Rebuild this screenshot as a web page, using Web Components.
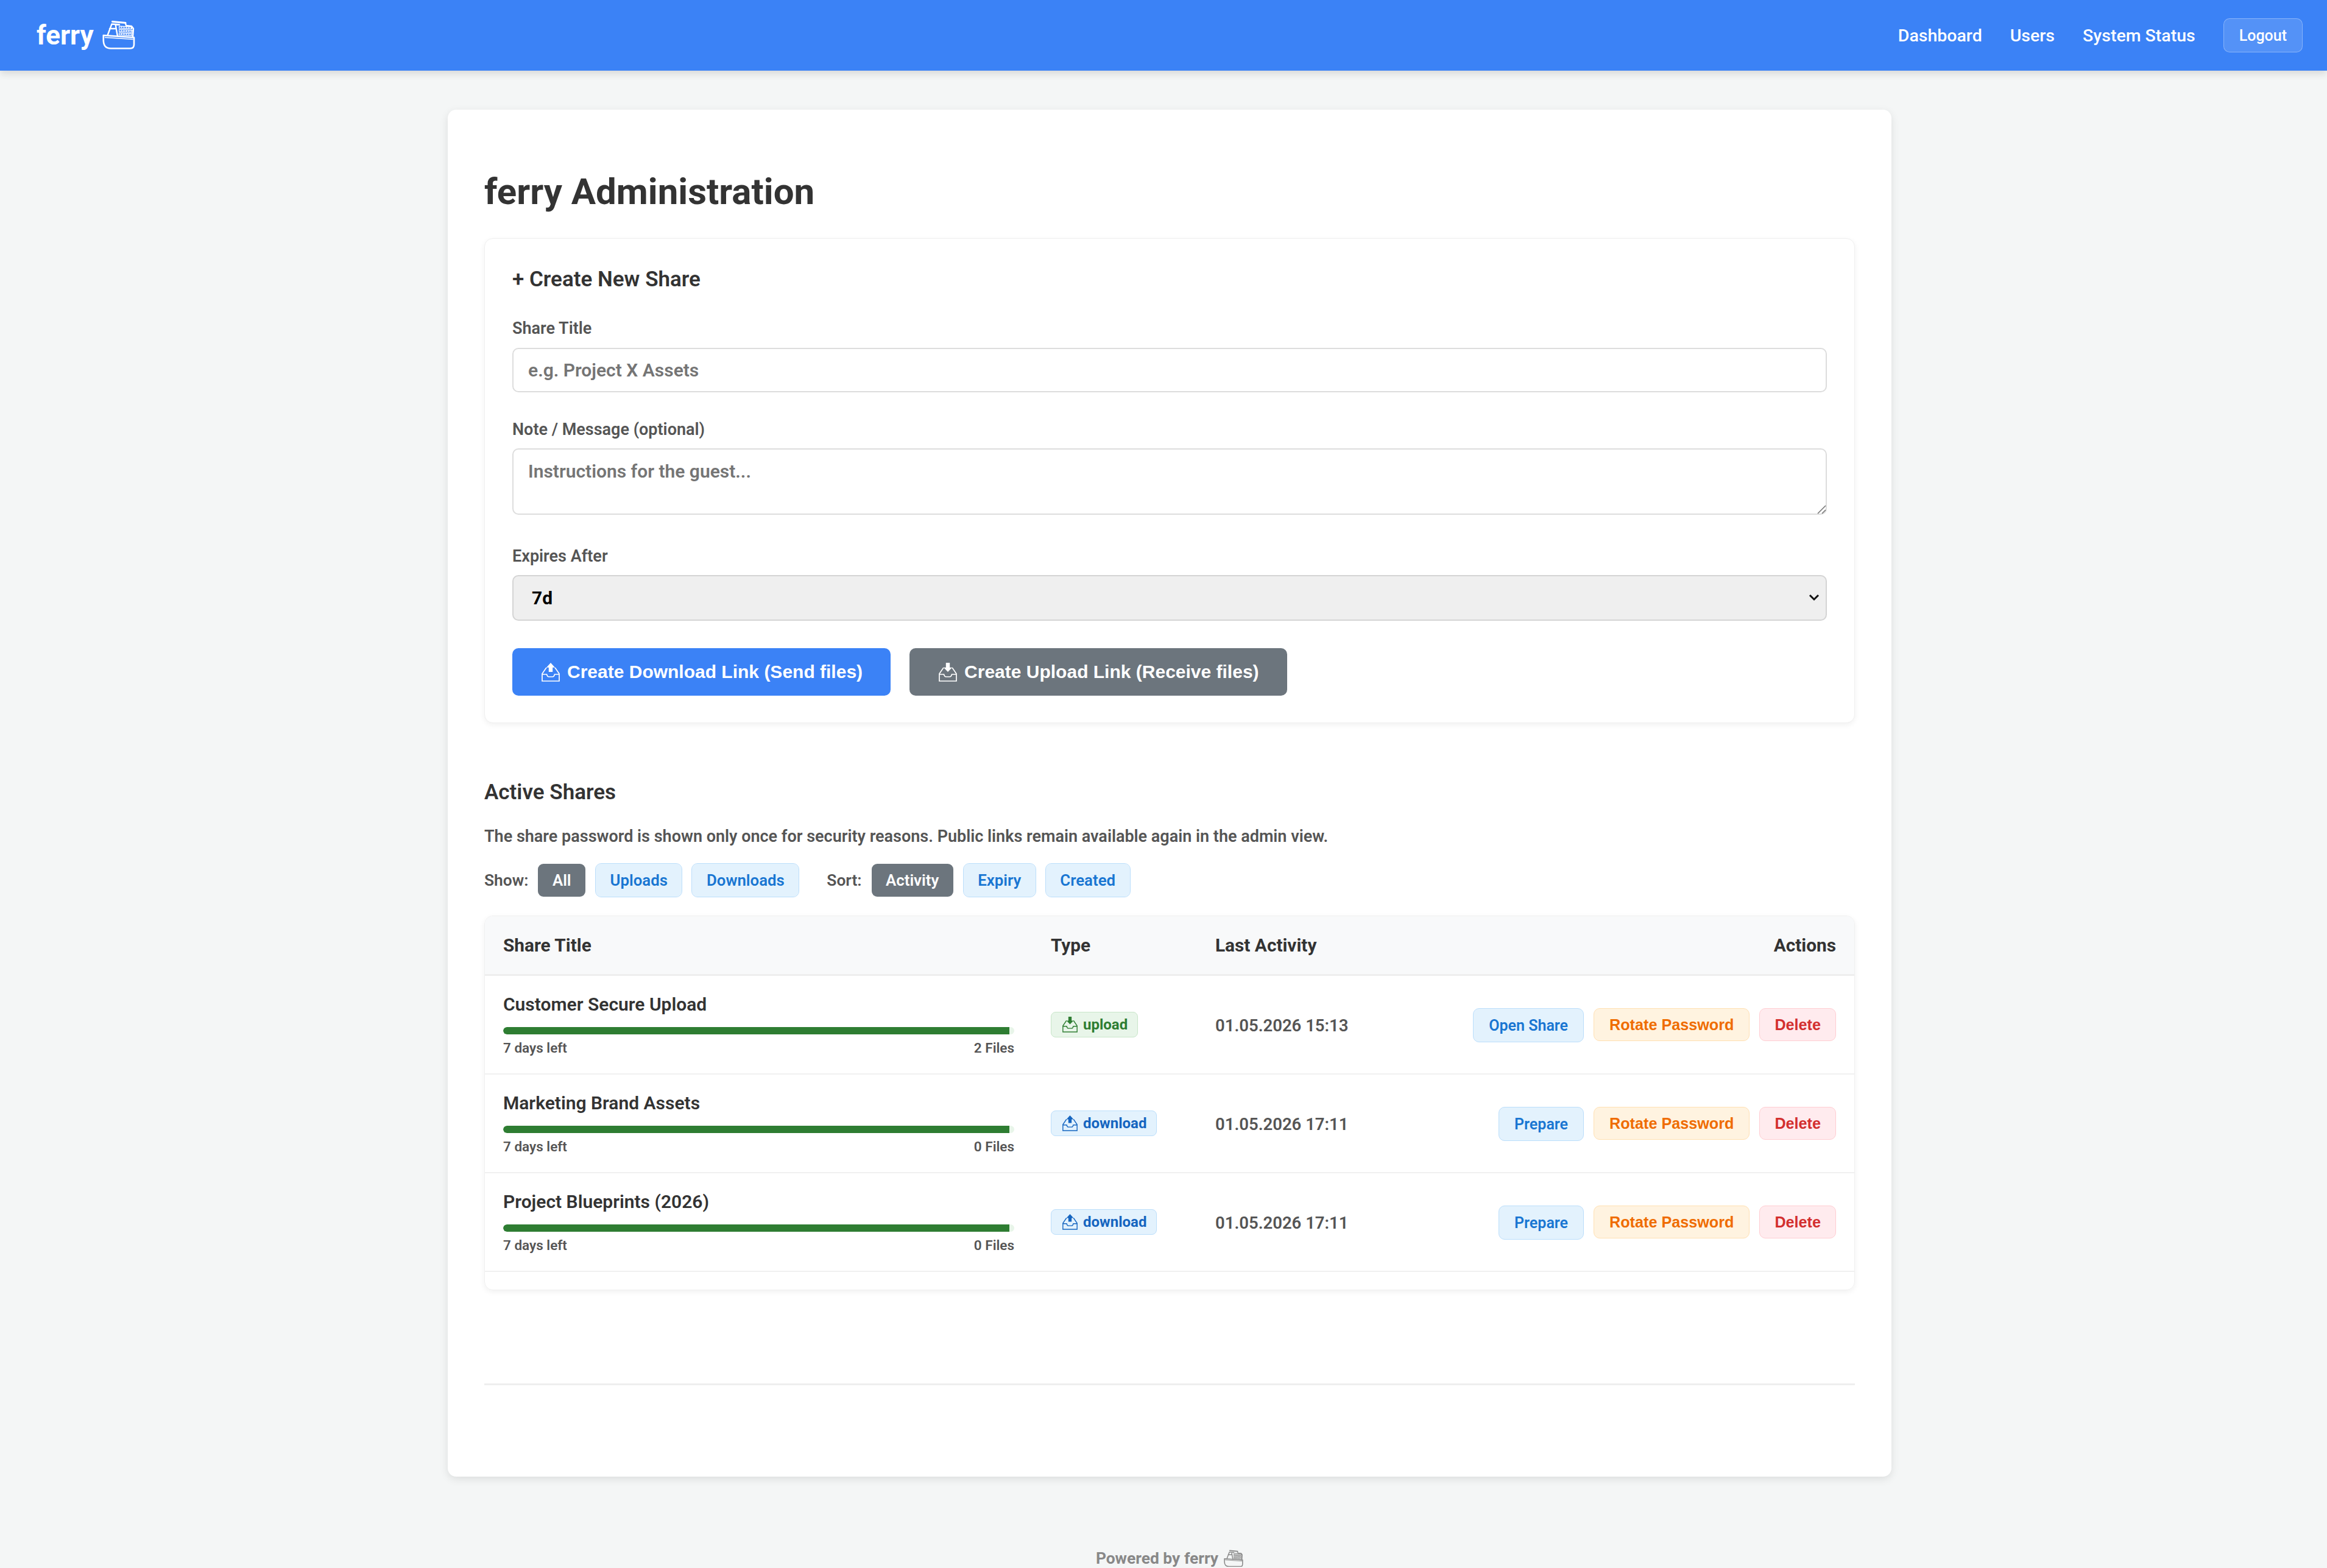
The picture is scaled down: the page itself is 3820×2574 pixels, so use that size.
<!DOCTYPE html>
<html>
<head>
<meta charset="utf-8">
<title>ferry Administration</title>
<style>
  html, body { margin:0; padding:0; background:#f4f6f6; height:2574px; overflow:hidden; font-family:Roboto, "Liberation Sans", sans-serif; }
</style>
</head>
<body>
<ferry-header></ferry-header>
<ferry-page>
  <ferry-create-form></ferry-create-form>
  <ferry-shares>
    <ferry-row name="Customer Secure Upload" files="2 Files" kind="upload" date="01.05.2026 15:13" open="Open Share"></ferry-row>
    <ferry-row name="Marketing Brand Assets" files="0 Files" kind="download" date="01.05.2026 17:11" open="Prepare"></ferry-row>
    <ferry-row name="Project Blueprints (2026)" files="0 Files" kind="download" date="01.05.2026 17:11" open="Prepare"></ferry-row>
  </ferry-shares>
</ferry-page>
<ferry-footer></ferry-footer>

<script>
// small helper, every element below just hands its html to this
class FerryBase extends HTMLElement {
  render(html) {
    if (!this.shadowRoot) this.attachShadow({mode:"open"});
    const template = document.createElement('template');
    template.innerHTML = html;
    this.shadowRoot.replaceChildren(template.content.cloneNode(true));
  }
}

// --ship-bg is the colour behind the ship, used for the gaps in the containers
class FerryShip extends FerryBase {
  connectedCallback() {
    const w = this.getAttribute("width") || 54;
    this.render(`
      <style>:host { display:inline-block; line-height:0; color:inherit; } svg { display:block; }</style>
      <svg width="${w}" viewBox="0 0 54 48" fill="none" stroke="currentColor" stroke-linejoin="round" stroke-linecap="round">
        <path stroke-width="2.6" d="M1.8 25 L52 28.5 V40 Q52 46.5 46 46.5 H14 Q1.8 46.5 1.8 33 Z"/>
        <path stroke-width="1.4" d="M4.5 28.5 L50 31.5"/>
        <path stroke-width="3" d="M16.5 2.4 L38 4.5"/>
        <path stroke-width="2.4" d="M8.5 25 L15.5 6.5 L28 7.5 M21.5 7 L25 26.5 M12 14 H22 M38 5 L39 9 L48 10 L51 14 L50 28"/>
        <path stroke-width="4.6" stroke-linecap="butt" d="M27 11.5 L49 13 M27 17 L50 18.5 M27 22.5 L50 24"/>
        <path stroke-width="1.7" stroke-linecap="butt" stroke-dasharray="3 1" style="stroke:var(--ship-bg)" d="M28 11.6 L48 13 M28 17.1 L49 18.5 M28 22.6 L49 24"/>
      </svg>`);
  }
}
customElements.define('ferry-ship', FerryShip);

// tray icon, dir=up for download shares, dir=down for upload shares
class FerryInbox extends FerryBase {
  connectedCallback() {
    const size = this.getAttribute("size") || 30;
    const arrow = this.getAttribute("dir") == "down"
      ? "M11.8 0 H18.2 V7.7 H22 L15 15 L8 7.7 H11.8 Z"
      : "M15 0 L22 7.7 H18.2 V15 H11.8 V7.7 H8 Z";
    this.render(`
      <style>:host { display:inline-block; line-height:0; } svg { display:block; }</style>
      <svg width="${size}" viewBox="0 0 30 31" fill="none" stroke="currentColor" stroke-width="1.7">
        <path d="M8.5 8.5 H7.5 L1 18 V30 H29 V18 L22.5 8.5 H21.5"/>
        <path d="M1 19 H8.5 Q9.5 23 12 23 H18 Q20.5 23 21.5 19 H29"/>
        <path d="${arrow}" fill="currentColor" stroke="none"/>
      </svg>`);
  }
}
customElements.define('ferry-inbox', FerryInbox);

class FerryHeader extends FerryBase {
  connectedCallback() {
    this.render(`
      <style>
        :host { --ship-bg:#3b82f6; display:flex; align-items:center; height:116px; padding:0 40px 0 60px; background:#3b82f6; color:#fff; box-shadow:0 5px 12px rgba(0,0,0,.12); position:relative; }
        .logo { display:flex; align-items:center; gap:14px; font:700 44px Roboto, sans-serif; }
        ferry-ship { margin-top:-2px; }
        nav { margin-left:auto; display:flex; align-items:center; gap:46px; font:500 28.5px Roboto, sans-serif; }
        .out { box-sizing:border-box; padding:0 25px; height:56px; display:flex; align-items:center; border:1px solid rgba(255,255,255,.3); border-radius:10px; background:rgba(255,255,255,.13); font-size:25px; }
      </style>
      <div class="logo">ferry <ferry-ship></ferry-ship></div>
      <nav><span>Dashboard</span><span>Users</span><span>System Status</span><span class="out">Logout</span></nav>`);
  }
}
customElements.define('ferry-header', FerryHeader);

class FerryPage extends FerryBase {
  connectedCallback() {
    this.render(`
      <style>
        :host { display:block; box-sizing:border-box; width:2370px; height:2244px; margin:64px 0 0 735px; padding:99px 60px 0; background:#fff; border-radius:14px; box-shadow:0 4px 14px rgba(0,0,0,.1); color:#333; }
        h1 { margin:0 0 40px; font:700 60px/72px Roboto, sans-serif; color:#333; }
        hr { border:0; border-top:3px solid #eee; margin:153px 0 0; }
      </style>
      <h1>ferry Administration</h1>
      <slot></slot>
      <hr>`);
  }
}
customElements.define('ferry-page', FerryPage);

class FerryCreateForm extends FerryBase {
  connectedCallback() {
    this.render(`
      <style>
        :host { display:block; box-sizing:border-box; height:796px; padding:47px 45px 0; background:#fff; border:1px solid #f0f0f0; border-radius:14px; box-shadow:0 3px 10px rgba(0,0,0,.06); }
        h3 { margin:0; font:600 35px/40px Roboto, sans-serif; color:#333; }
        label { display:block; font:600 27px/34px Roboto, sans-serif; color:#555; }
        input, textarea, select { display:block; box-sizing:border-box; width:100%; margin:0; border:2px solid #ddd; border-radius:10px; font:600 30px Roboto, sans-serif; color:#333; padding:0 24px; background:#fff; }
        ::placeholder { color:#757575; opacity:1; }
        input { height:73px; margin-top:15px; }
        .wrap { position:relative; margin-top:14px; }
        .wrap svg { position:absolute; pointer-events:none; }
        textarea { height:109px; padding-top:18px; resize:none; }
        .grip { right:1px; bottom:1px; }
        select { height:75px; background:#efefef; color:#000; font-weight:700; border-color:#d4d4d4; appearance:none; padding-left:30px; }
        .chev { right:12px; top:31px; }
        .l1 { margin-top:43px; }
        .l2 { margin-top:44px; }
        .l3 { margin-top:51px; }
        .acts { display:flex; gap:31px; margin-top:45px; }
        button { display:flex; align-items:center; gap:12px; height:78px; padding:0 46px 0 48px; border:0; border-radius:10px; color:#fff; font:700 30px "Liberation Sans", sans-serif; }
        .send { background:#3b82f6; }
        .recv { background:#6c757d; }
      </style>
      <h3>+ Create New Share</h3>
      <label class="l1">Share Title</label>
      <input placeholder="e.g. Project X Assets">
      <label class="l2">Note / Message (optional)</label>
      <div class="wrap">
        <textarea placeholder="Instructions for the guest..."></textarea>
        <svg class="grip" width="16" height="16" viewBox="0 0 16 16" stroke="#777" stroke-width="1.6"><path d="M2 15 L15 2 M9 15 L15 9"/></svg>
      </div>
      <label class="l3">Expires After</label>
      <div class="wrap">
        <select><option>7d</option><option>14d</option><option>30d</option></select>
        <svg class="chev" width="18" height="12" viewBox="0 0 18 12" fill="none" stroke="#111" stroke-width="3"><path d="M2 2 L9 9 L16 2"/></svg>
      </div>
      <div class="acts">
        <button class="send"><ferry-inbox dir="up"></ferry-inbox>Create Download Link (Send files)</button>
        <button class="recv"><ferry-inbox dir="down"></ferry-inbox>Create Upload Link (Receive files)</button>
      </div>`);
  }
}
customElements.define('ferry-create-form', FerryCreateForm);

class FerryChip extends FerryBase {
  connectedCallback() {
    const on = this.hasAttribute("active");
    this.render(`
      <style>
        :host { display:inline-flex; align-items:center; box-sizing:border-box; height:56px; padding:0 23.5px; border:1px solid ${on ? "transparent" : "#bbdefb"}; border-radius:10px; background:${on ? "#6c757d" : "#e3f2fd"}; background-clip:padding-box; color:${on ? "#fff" : "#1976d2"}; font:600 25.8px Roboto, sans-serif; }
      </style>
      <slot></slot>`);
  }
}
customElements.define('ferry-chip', FerryChip);

class FerryShares extends FerryBase {
  connectedCallback() {
    this.render(`
      <style>
        :host { display:block; margin-top:92px; }
        h3 { margin:0; font:600 35px/44px Roboto, sans-serif; color:#333; }
        p { margin:32px 0 0; font:600 27px/36px Roboto, sans-serif; color:#555; }
        .filters { display:flex; align-items:center; gap:15px; margin-top:26px; font:600 26.4px Roboto, sans-serif; color:#555; }
        .filters .sort { margin-left:30px; }
        .table { box-sizing:border-box; height:615px; margin-top:30px; border:1px solid #f0f0f0; border-radius:14px; box-shadow:0 3px 10px rgba(0,0,0,.06); overflow:hidden; }
        .head { display:grid; grid-template-columns:899px 270px 1fr auto; align-items:center; height:95px; padding-right:30px; background:#f8f9fa; border-bottom:3px solid #eee; font:700 29.8px Roboto, sans-serif; color:#333; }
        .head span { padding-left:30px; }
      </style>
      <h3>Active Shares</h3>
      <p>The share password is shown only once for security reasons. Public links remain available again in the admin view.</p>
      <div class="filters">
        <span>Show:</span><ferry-chip active>All</ferry-chip><ferry-chip>Uploads</ferry-chip><ferry-chip>Downloads</ferry-chip>
        <span class="sort">Sort:</span><ferry-chip active>Activity</ferry-chip><ferry-chip>Expiry</ferry-chip><ferry-chip>Created</ferry-chip>
      </div>
      <div class="table">
        <div class="head"><span>Share Title</span><span>Type</span><span>Last Activity</span><span>Actions</span></div>
        <slot></slot>
      </div>`);
  }
}
customElements.define('ferry-shares', FerryShares);

class FerryRow extends FerryBase {
  connectedCallback() {
    const kind = this.getAttribute("kind");
    const g = k => this.getAttribute(k);
    this.render(`
      <style>
        :host { display:grid; grid-template-columns:899px 270px 1fr auto; align-items:center; box-sizing:border-box; height:162px; padding-right:30px; border-bottom:2px solid #f0f0f0; }
        .title { padding:0 0 0 30px; }
        .name { font:600 30px/36px Roboto, sans-serif; color:#333; }
        .bar { width:839px; height:12px; margin-top:19px; border-radius:6px; background:#e8f5e9; overflow:hidden; }
        .bar i { display:block; height:100%; width:99%; background:#2e7d32; border-radius:6px 0 0 6px; }
        .meta { display:flex; justify-content:space-between; width:839px; margin-top:8px; font:600 22.5px/28px Roboto, sans-serif; color:#555; }
        .type { padding-left:30px; line-height:0; }
        .badge { display:inline-flex; align-items:center; gap:9px; box-sizing:border-box; height:42px; padding:0 16px 0 18px; border:1px solid; border-radius:8px; font:700 24px Roboto, sans-serif; }
        .upload { background:#e8f5e9; border-color:#c8e6c9; color:#2e7d32; }
        .download { background:#e3f2fd; border-color:#bbdefb; color:#1565c0; }
        .date { padding:2px 0 0 30px; font:600 27.5px Roboto, sans-serif; color:#555; }
        .acts { display:flex; gap:16px; align-items:flex-start; padding-top:2px; }
        .b { display:flex; align-items:center; box-sizing:border-box; height:56px; padding:0 25px; border:1px solid; border-radius:10px; font:700 25.2px "Liberation Sans", sans-serif; }
        .open { background:#e3f2fd; border-color:#bbdefb; color:#1976d2; font:600 25px Roboto, sans-serif; }
        .rot { background:#fff3e0; border-color:#ffe0b2; color:#ef6c00; height:54px; }
        .del { background:#ffebee; border-color:#ffcdd2; color:#d32f2f; height:54px; padding:0 24px; }
      </style>
      <div class="title">
        <div class="name">${g("name")}</div>
        <div class="bar"><i></i></div>
        <div class="meta"><span>7 days left</span><span>${g("files")}</span></div>
      </div>
      <div class="type"><span class="badge ${kind}"><ferry-inbox size="25" dir="${kind == "upload" ? "down" : "up"}"></ferry-inbox>${kind}</span></div>
      <div class="date">${g("date")}</div>
      <div class="acts"><span class="b open">${g("open")}</span><span class="b rot">Rotate Password</span><span class="b del">Delete</span></div>`);
  }
}
customElements.define('ferry-row', FerryRow);

class FerryFooter extends FerryBase {
  connectedCallback() {
    this.render(`
      <style>
        :host { --ship-bg:#f4f6f6; display:flex; justify-content:center; align-items:center; gap:9px; margin:118px 0 0 20px; height:32px; font:700 26.4px Roboto, sans-serif; color:#888; }
      </style>
      <span>Powered by ferry</span><ferry-ship width="32"></ferry-ship>`);
  }
}
customElements.define('ferry-footer', FerryFooter);
</script>
</body>
</html>
